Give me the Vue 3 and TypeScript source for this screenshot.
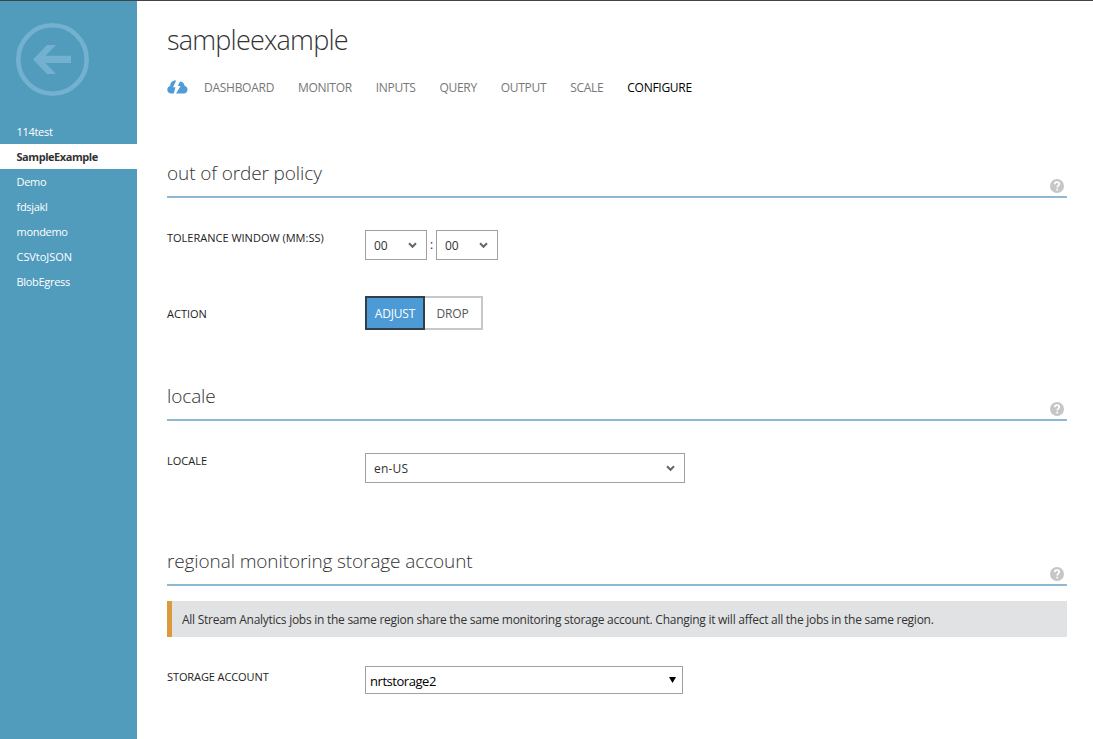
<script setup lang="ts">
import { ref } from 'vue'

const jobs = ['114test', 'SampleExample', 'Demo', 'fdsjakl', 'mondemo', 'CSVtoJSON', 'BlobEgress']
const activeJob = ref('SampleExample')
const tabs = ['DASHBOARD', 'MONITOR', 'INPUTS', 'QUERY', 'OUTPUT', 'SCALE', 'CONFIGURE']
const activeTab = ref('CONFIGURE')
const action = ref('ADJUST')
</script>

<template>
  <div class="page">
    <aside class="sidebar">
      <svg class="back" width="75" height="75" viewBox="0 0 75 75">
        <circle cx="37.500" cy="37.500" r="34.2" fill="none" stroke="#74b0cf" stroke-width="4.6" />
        <path d="M18 37.500 32 23h9L30.500 33.800H56v7.200H30.500L41 52h-9Z" fill="#74b0cf" />
      </svg>
      <nav class="jobs">
        <a v-for="j in jobs" :key="j" class="job" :class="[j.toLowerCase(), { active: j === activeJob }]" @click="activeJob = j">{{ j }}</a>
      </nav>
    </aside>
    <main class="main">
      <h1 class="title">sampleexample</h1>
      <nav class="tabs">
        <svg class="cloud" width="21" height="14" viewBox="0 0 21 14">
          <path d="M4.500 13.500C2 13.500.3 12 .3 9.700c0-1.900 1-3.300 2.900-3.800C3.200 2.800 5 .4 8.400.4h.8L6 7.200h2.500L6.800 13.500ZM9 13.500 13.600 6h-2.800L13 1.600c2.600.1 4.200 1.600 4.500 4.200 1.900.5 3 2 3 3.900 0 2.400-1.600 3.800-4 3.800Z" fill="#4f9cd6" />
        </svg>
        <a v-for="t in tabs" :key="t" class="tab" :class="{ active: t === activeTab }" @click="activeTab = t">{{ t }}</a>
      </nav>

      <section class="section order">
        <header class="head">
          <h2>out of order policy</h2>
          <svg class="help" width="14" height="14" viewBox="0 0 14 14"><circle cx="7" cy="7" r="7" fill="#c6c6c6" /><path d="M4.700 5.300C4.700 3.900 5.600 3.100 7 3.100s2.300.8 2.300 2C9.300 6.600 7.200 6.700 7.200 8.500M7.200 9.700v1.700" fill="none" stroke="#fff" stroke-width="1.700" /></svg>
        </header>
        <div class="row first">
          <span class="label">TOLERANCE WINDOW (MM:SS)</span>
          <div class="select small"><span>00</span><svg width="9" height="7" viewBox="0 0 9 7"><path d="M1 1.300 4.500 4.800 8 1.300" fill="none" stroke="#666" stroke-width="2" /></svg></div>
          <span class="colon">:</span>
          <div class="select small"><span>00</span><svg width="9" height="7" viewBox="0 0 9 7"><path d="M1 1.300 4.500 4.800 8 1.300" fill="none" stroke="#666" stroke-width="2" /></svg></div>
        </div>
        <div class="row action">
          <span class="label">ACTION</span>
          <div class="toggle">
            <button class="opt adjust" :class="{ on: action === 'ADJUST' }" @click="action = 'ADJUST'">ADJUST</button>
            <button class="opt drop" :class="{ on: action === 'DROP' }" @click="action = 'DROP'">DROP</button>
          </div>
        </div>
      </section>

      <section class="section locale">
        <header class="head">
          <h2>locale</h2>
          <svg class="help" width="14" height="14" viewBox="0 0 14 14"><circle cx="7" cy="7" r="7" fill="#c6c6c6" /><path d="M4.700 5.300C4.700 3.900 5.600 3.100 7 3.100s2.300.8 2.300 2C9.300 6.600 7.200 6.700 7.200 8.500M7.200 9.700v1.700" fill="none" stroke="#fff" stroke-width="1.700" /></svg>
        </header>
        <div class="row first">
          <span class="label">LOCALE</span>
          <div class="select wide"><span>en-US</span><svg width="9" height="7" viewBox="0 0 9 7"><path d="M1 1.300 4.500 4.800 8 1.300" fill="none" stroke="#666" stroke-width="2" /></svg></div>
        </div>
      </section>

      <section class="section storage">
        <header class="head">
          <h2>regional monitoring storage account</h2>
          <svg class="help" width="14" height="14" viewBox="0 0 14 14"><circle cx="7" cy="7" r="7" fill="#c6c6c6" /><path d="M4.700 5.300C4.700 3.900 5.600 3.100 7 3.100s2.300.8 2.300 2C9.300 6.600 7.200 6.700 7.200 8.500M7.200 9.700v1.700" fill="none" stroke="#fff" stroke-width="1.700" /></svg>
        </header>
        <p class="notice">All Stream Analytics jobs in the same region share the same monitoring storage account. Changing it will affect all the jobs in the same region.</p>
        <div class="row account">
          <span class="label">STORAGE ACCOUNT</span>
          <div class="select native"><span>nrtstorage2</span><svg width="7" height="6" viewBox="0 0 7 6"><path d="M0 0h7L3.500 6Z" fill="#000" /></svg></div>
        </div>
      </section>
    </main>
  </div>
</template>

<style>
body { margin: 0; background: #fff; }
</style>

<style scoped>
* { box-sizing: border-box; }
.page { display: flex; width: 1093px; height: 739px; border-top: 1px solid #3f4447; overflow: hidden; background: #fff; font-family: "Open Sans", "Noto Sans", sans-serif; color: #333; white-space: nowrap; }
.sidebar { width: 137px; background: #519cbd; flex: none; }
.back { display: block; margin: 21px 0 0 15px; }
.jobs { margin-top: 22px; display: flex; flex-direction: column; }
.job { height: 25px; line-height: 25px; padding-left: 16.5px; font-size: 11px; letter-spacing: -0.3px; color: #fff; }
.job.csvtojson { letter-spacing: -0.05px; }
.job.active { background: #fff; color: #333; font-weight: 700; letter-spacing: -0.45px; }
.main { flex: 1; padding: 0 26px 0 30px; }
h1, h2, p { margin: 0; font-weight: 300; }
.title { margin-top: 19px; height: 40px; line-height: 40px; font-size: 27px; letter-spacing: -0.8px; color: #333; }
.tabs { display: flex; align-items: center; height: 20px; margin-top: 17px; }
.cloud { margin-right: 16px; flex: none; }
.tab { font-size: 12px; letter-spacing: -0.27px; color: #777; margin-right: 23.8px; }
.tab.active { color: #000; }
.section { height: 223px; }
.order { margin-top: 59px; }
.locale { height: 165px; }
.head { display: flex; height: 42px; border-bottom: 2px solid #8eb8d3; justify-content: space-between; }
h2 { font-size: 19px; line-height: 34px; letter-spacing: -0.11px; color: #333; }
.help { margin: 23px 3px 0 0; }
.row { display: flex; }
.label { width: 198px; flex: none; font-size: 11px; line-height: 16px; letter-spacing: 0; color: #222; }
.first { margin-top: 32px; }
.select { height: 30px; border: 1px solid #a0a0a0; display: flex; align-items: center; justify-content: space-between; padding: 0 9px 0 8px; font-size: 12px; color: #333; background: #fff; }
.small { width: 62px; }
.wide { width: 320px; letter-spacing: 0.2px; }
.colon { width: 9px; text-align: center; font-size: 12px; line-height: 29px; }
.action { margin-top: 36px; }
.action .label { padding-top: 10px; }
.toggle { display: flex; }
.opt { height: 34px; padding: 0; font: 400 12px "Open Sans", sans-serif; border: 2px solid #c8c8c8; border-left: 0; background: #fff; color: #555; letter-spacing: -0.2px; }
.opt.on { background: #4c9bd6; border: 2px solid #333f48; color: #fff; }
.adjust { width: 60px; }
.drop { width: 58px; padding-right: 1px; }
.notice { margin-top: 15px; height: 36px; line-height: 38px; border-left: 5px solid #dc9a3e; background: #e1e2e3; padding-left: 10px; font-size: 12px; font-weight: 400; letter-spacing: -0.265px; color: #333; }
.account { margin-top: 29px; }
.account .label { padding-top: 3px; letter-spacing: -0.1px; }
.native { width: 318px; height: 28px; padding: 2px 6px 0 4px; color: #000; font-size: 13px; letter-spacing: -0.45px; }
.native svg { margin-bottom: 3px; }
</style>
